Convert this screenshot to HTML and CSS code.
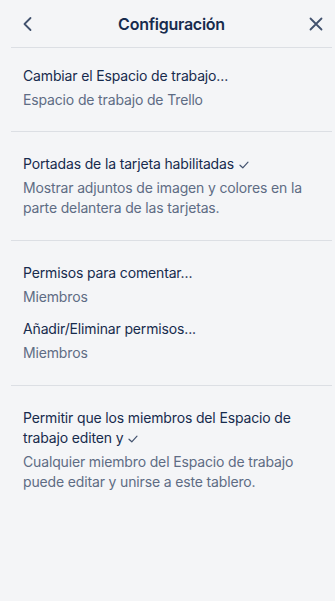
FILE: index.html
```html
<!DOCTYPE html>
<html lang="es">
<head>
    <meta charset="UTF-8">
    <meta name="viewport" content="width=device-width, initial-scale=1.0">
    <title>Configuración</title>
    <link rel="stylesheet" href="styles.css">
</head>
<body>
    <div class="panel">
        <div class="panel-header">
            <button class="icon-button" aria-label="Volver">
                <svg width="24" height="24" viewBox="0 0 24 24"><path d="M15.5 6 L9.5 12 L15.5 18" fill="none" stroke="#42526e" stroke-width="1.8" stroke-linecap="round" stroke-linejoin="round"/></svg>
            </button>
            <h2 class="panel-title">Configuración</h2>
            <button class="icon-button" aria-label="Cerrar">
                <svg width="24" height="24" viewBox="0 0 24 24"><path d="M6.5 6.5 L17.5 17.5 M17.5 6.5 L6.5 17.5" fill="none" stroke="#42526e" stroke-width="1.8" stroke-linecap="round"/></svg>
            </button>
        </div>

        <div class="section first">
            <div class="setting">
                <div class="setting-title">Cambiar el Espacio de trabajo...</div>
                <div class="setting-desc">Espacio de trabajo de Trello</div>
            </div>
        </div>

        <div class="section">
            <div class="setting">
                <div class="setting-title">Portadas de la tarjeta habilitadas <svg class="check" width="10" height="8" viewBox="0 0 10 8"><path d="M1 4.2 L3.8 6.8 L9 1.2" fill="none" stroke="#42526e" stroke-width="1.2" stroke-linecap="round" stroke-linejoin="round"/></svg></div>
                <div class="setting-desc">Mostrar adjuntos de imagen y colores en la parte delantera de las tarjetas.</div>
            </div>
        </div>

        <div class="section">
            <div class="setting">
                <div class="setting-title">Permisos para comentar...</div>
                <div class="setting-desc">Miembros</div>
            </div>
            <div class="setting">
                <div class="setting-title">Añadir/Eliminar permisos...</div>
                <div class="setting-desc">Miembros</div>
            </div>
        </div>

        <div class="section last">
            <div class="setting">
                <div class="setting-title">Permitir que los miembros del Espacio de trabajo editen y <svg class="check" width="10" height="8" viewBox="0 0 10 8"><path d="M1 4.2 L3.8 6.8 L9 1.2" fill="none" stroke="#42526e" stroke-width="1.2" stroke-linecap="round" stroke-linejoin="round"/></svg></div>
                <div class="setting-desc">Cualquier miembro del Espacio de trabajo puede editar y unirse a este tablero.</div>
            </div>
        </div>
    </div>
</body>
</html>
```

FILE: styles.css
```css
body {
    margin: 0;
    background: #f4f5f7;
    font-family: Inter, "Noto Sans", sans-serif;
    color: #172b4d;
    min-height: 100vh;
}

.panel {
    padding: 0 3px 0 11px;
}

.panel-header {
    height: 47px;
    display: flex;
    align-items: center;
    justify-content: space-between;
    border-bottom: 1px solid #dcdfe4;
    padding: 0 4px;
}

.panel-title {
    margin: 0;
    font-size: 16px;
    font-weight: 600;
    color: #172b4d;
    line-height: 20px;
    letter-spacing: -0.25px;
}

.icon-button {
    width: 24px;
    height: 24px;
    padding: 0;
    border: none;
    background: none;
    display: flex;
    align-items: center;
    justify-content: center;
    cursor: pointer;
}

.section {
    padding: 22px 12px 22px;
    border-bottom: 1px solid #dcdfe4;
}

.section.first {
    padding-top: 18px;
    padding-bottom: 21px;
}

.section.last {
    border-bottom: none;
}

.setting + .setting {
    margin-top: 12px;
}

.setting-title {
    font-size: 14px;
    line-height: 20px;
    color: #172b4d;
    letter-spacing: -0.15px;
}

.setting-desc {
    margin-top: 4px;
    font-size: 14px;
    line-height: 20px;
    color: #5e6c84;
    letter-spacing: -0.15px;
}

.check {
    vertical-align: 0px;
    margin-left: 1px;
}
```
